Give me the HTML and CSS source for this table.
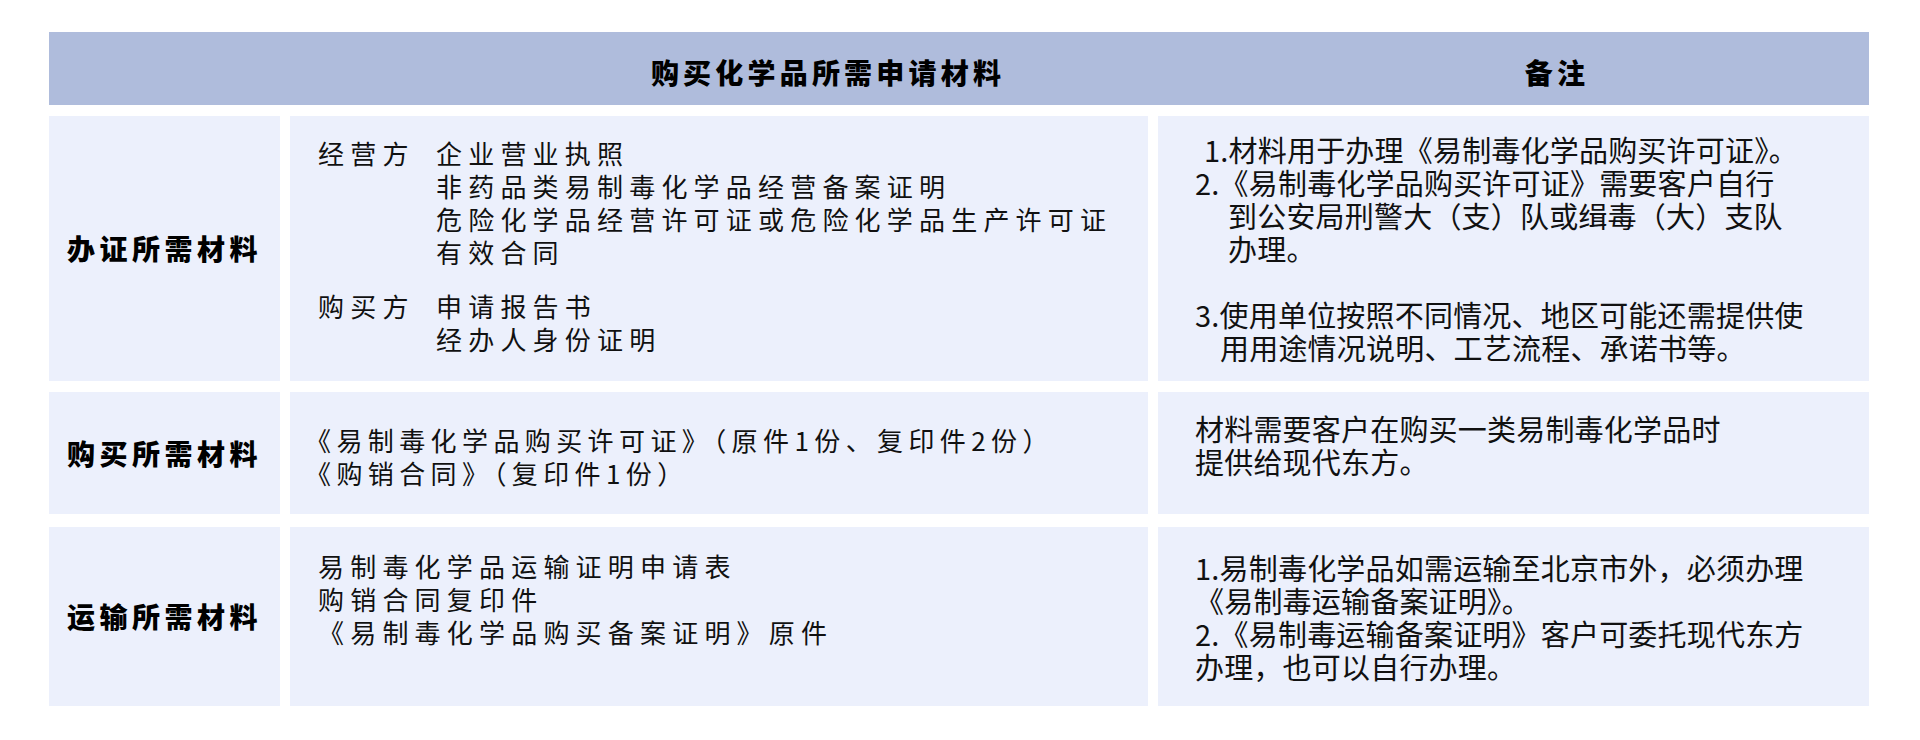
FILE: index.html
```html
<!DOCTYPE html>
<html lang="zh-CN">
<head>
<meta charset="utf-8">
<title>购买化学品所需申请材料</title>
<link rel="stylesheet" href="styles.css">
</head>
<body>
<div class="sheet">
  <div class="head">
    <div class="head-blank"></div>
    <div class="head-title">购买化学品所需申请材料</div>
    <div class="head-title">备注</div>
  </div>

  <div class="row row-1">
    <div class="cell label">办证所需材料</div>
    <div class="cell mid mid-first">
      <div class="group">
        <div class="party">经营方</div>
        <div class="items">
          <div>企业营业执照</div>
          <div>非药品类易制毒化学品经营备案证明</div>
          <div>危险化学品经营许可证或危险化学品生产许可证</div>
          <div>有效合同</div>
        </div>
      </div>
      <div class="group">
        <div class="party">购买方</div>
        <div class="items">
          <div>申请报告书</div>
          <div>经办人身份证明</div>
        </div>
      </div>
    </div>
    <div class="cell note">
      <div class="ln first">1.材料用于办理《易制毒化学品购买许可证》。</div>
      <div class="ln">2.《易制毒化学品购买许可证》需要客户自行</div>
      <div class="ln indent">到公安局刑警大（支）队或缉毒（大）支队</div>
      <div class="ln indent">办理。</div>
      <div class="ln blank"></div>
      <div class="ln">3.使用单位按照不同情况、地区可能还需提供使</div>
      <div class="ln indent-s">用用途情况说明、工艺流程、承诺书等。</div>
    </div>
  </div>

  <div class="row row-2">
    <div class="cell label">购买所需材料</div>
    <div class="cell mid mid-tight">
      <div>《易制毒化学品购买许可证》（原件1份、复印件2份）</div>
      <div>《购销合同》（复印件1份）</div>
    </div>
    <div class="cell note note-up">
      <div class="ln">材料需要客户在购买一类易制毒化学品时</div>
      <div class="ln">提供给现代东方。</div>
    </div>
  </div>

  <div class="row row-3">
    <div class="cell label">运输所需材料</div>
    <div class="cell mid">
      <div>易制毒化学品运输证明申请表</div>
      <div>购销合同复印件</div>
      <div>《易制毒化学品购买备案证明》原件</div>
      <div class="blank"></div>
    </div>
    <div class="cell note">
      <div class="ln">1.易制毒化学品如需运输至北京市外，必须办理</div>
      <div class="ln">《易制毒运输备案证明》。</div>
      <div class="ln">2.《易制毒运输备案证明》客户可委托现代东方</div>
      <div class="ln">办理，也可以自行办理。</div>
    </div>
  </div>
</div>
</body>
</html>
```

FILE: styles.css
```css
html, body {
  margin: 0;
  padding: 0;
  background: #ffffff;
}

body {
  font-family: "Noto Sans CJK SC", "Noto Sans", sans-serif;
  color: #111111;
}

.sheet {
  width: 1820px;
  padding: 32px 0 0 49px;
  display: flex;
  flex-direction: column;
  gap: 11px;
}

.head {
  height: 73px;
  background: #afbcdc;
  display: grid;
  grid-template-columns: 362px 830px 628px;
  align-items: center;
}

.head-title {
  text-align: center;
  font-size: 28px;
  font-weight: 900;
  letter-spacing: 4.2px;
  line-height: 1;
  padding-left: 4px;
  padding-top: 6px;
  color: #000000;
}

.row {
  display: grid;
  grid-template-columns: 231px 858px 711px;
  column-gap: 10px;
}

.row-1 { height: 265px; }
.row-2 { height: 122px; }
.row-3 { height: 179px; margin-top: 2px; }

.cell {
  background: #ecf0fc;
  display: flex;
  flex-direction: column;
  justify-content: center;
}

.label {
  align-items: center;
  font-size: 28px;
  font-weight: 900;
  letter-spacing: 4.5px;
  line-height: 33px;
  color: #000000;
  padding-left: 0;
}

.mid {
  padding-left: 28px;
  padding-bottom: 3px;
  font-size: 26px;
  letter-spacing: 6.2px;
  line-height: 33px;
}

.mid-first {
  padding-bottom: 7px;
}

.mid-tight {
  padding-left: 15px;
  letter-spacing: 5.4px;
  padding-top: 6px;
  padding-bottom: 0;
}

.group {
  display: flex;
}

.group + .group {
  margin-top: 21px;
}

.party {
  width: 118px;
  flex: none;
}

.blank {
  height: 33px;
}

.note {
  padding-left: 37px;
  font-size: 29px;
  line-height: 33px;
  letter-spacing: 0.2px;
}

.note-up {
  padding-bottom: 16px;
}

.ln.first { padding-left: 9px; }
.ln.indent { padding-left: 33px; }
.ln.indent-s { padding-left: 25px; }
.ln.blank { height: 33px; }
```
